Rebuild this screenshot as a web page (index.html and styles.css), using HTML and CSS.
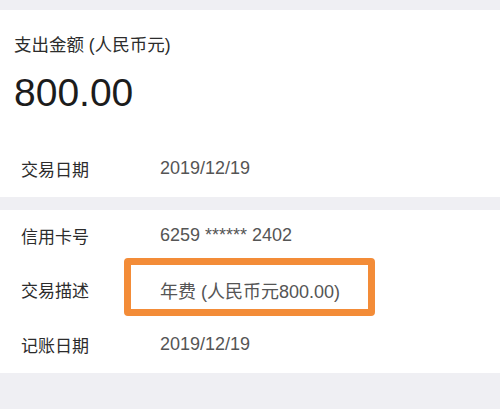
FILE: index.html
```html
<!DOCTYPE html>
<html lang="zh">
<head>
<meta charset="utf-8">
<link rel="stylesheet" href="styles.css">
</head>
<body>
<div class="page">
  <section class="card">
    <div class="summary">
      <div class="summary-label">支出金额 (人民币元)</div>
      <div class="amount">800.00</div>
    </div>
    <div class="row"><span class="key">交易日期</span><span class="val">2019/12/19</span></div>
  </section>
  <section class="card">
    <div class="row"><span class="key">信用卡号</span><span class="val">6259 ****** 2402</span></div>
    <div class="row"><span class="key">交易描述</span><span class="val mark">年费 (人民币元800.00)<span class="highlight"></span></span></div>
    <div class="row"><span class="key">记账日期</span><span class="val">2019/12/19</span></div>
  </section>
</div>
</body>
</html>
```
FILE: styles.css
```css
html, body {
  margin: 0;
  padding: 0;
  background: #efeff3;
}
body {
  font-family: "Liberation Sans", "Noto Sans CJK SC", sans-serif;
  color: #2a2a2a;
}
.page {
  width: 500px;
  height: 409px;
  padding-top: 10px;
  box-sizing: border-box;
  display: flex;
  flex-direction: column;
  gap: 13px;
}
.card {
  background: #fff;
  display: flex;
  flex-direction: column;
}
.summary {
  height: 133px;
  padding-left: 14px;
  box-sizing: border-box;
  display: flex;
  flex-direction: column;
}
.summary-label {
  font-size: 17.5px;
  margin-top: 24px;
  line-height: 22px;
  color: #2c2c2c;
}
.amount {
  font-size: 39px;
  line-height: 44px;
  margin-top: 15px;
  color: #1c1c1c;
}
.row {
  height: 54px;
  display: flex;
  align-items: center;
  padding-left: 21px;
  padding-bottom: 3px;
  box-sizing: border-box;
  font-size: 17px;
}
.card:last-child .row:last-child {
  height: 55px;
}
.key {
  width: 139px;
  color: #2c2c2c;
}
.val {
  color: #555;
  font-size: 18px;
}
.mark {
  position: relative;
}
.highlight {
  position: absolute;
  left: -36px;
  top: -19px;
  width: 251px;
  height: 58px;
  box-sizing: border-box;
  border: 7px solid #f38c38;
  border-radius: 4px;
}
```
